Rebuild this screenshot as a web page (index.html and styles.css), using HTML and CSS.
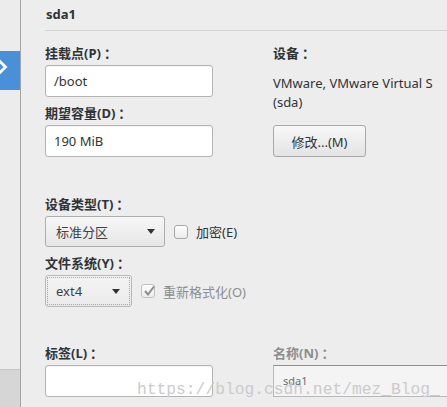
FILE: index.html
```html
<!DOCTYPE html>
<html lang="zh-CN">
<head>
<meta charset="utf-8">
<title>sda1</title>
<link rel="stylesheet" href="styles.css">
</head>
<body>
<div class="app">
  <aside class="sidebar">
    <div class="side-top"></div>
    <div class="side-sel">
      <svg class="chev" width="10" height="16" viewBox="0 0 10 16"><polyline points="-1,1.5 5.5,8 -1,14.5" fill="none" stroke="#ffffff" stroke-width="2.8"/></svg>
    </div>
    <div class="side-fill"></div>
    <div class="side-bottom"></div>
  </aside>
  <main class="main">
    <header class="title">sda1</header>

    <section class="row row-top">
      <div class="col-left">
        <label class="lbl">挂载点(P)<span class="colon">：</span></label>
        <div class="input">/boot</div>
        <label class="lbl lbl-next">期望容量(D)<span class="colon">：</span></label>
        <div class="input">190 MiB</div>
      </div>
      <div class="col-right">
        <div class="lbl">设备<span class="colon">：</span></div>
        <div class="dev">VMware, VMware Virtual S<br>(sda)</div>
        <button class="btn">修改...(M)</button>
      </div>
    </section>

    <section class="block">
      <label class="lbl">设备类型(T)<span class="colon">：</span></label>
      <div class="line">
        <div class="select select-wide"><span>标准分区</span><i class="arrow"></i></div>
        <span class="check"></span>
        <span class="check-text">加密(E)</span>
      </div>
      <label class="lbl lbl-next">文件系统(Y)<span class="colon">：</span></label>
      <div class="line line-fs">
        <div class="select select-narrow"><span>ext4</span><i class="arrow"></i></div>
        <span class="check check-off">
          <svg width="14" height="14" viewBox="0 0 14 14"><polyline points="3,7 6,10.5 12,2.5" fill="none" stroke="#8a8d8e" stroke-width="2"/></svg>
        </span>
        <span class="check-text muted">重新格式化(O)</span>
      </div>
    </section>

    <section class="row row-bottom">
      <div class="col-left">
        <label class="lbl">标签(L)<span class="colon">：</span></label>
        <div class="input"></div>
      </div>
      <div class="col-right col-grow">
        <label class="lbl muted">名称(N)<span class="colon">：</span></label>
        <div class="input input-off">sda1</div>
      </div>
    </section>
  </main>
  <div class="watermark">https://blog.csdn.net/mez_Blog_</div>
</div>
</body>
</html>
```

FILE: styles.css
```css
* { box-sizing: border-box; margin: 0; padding: 0; }

html, body { height: 100%; }

body {
  background: #ededed;
  font-family: "Noto Sans", "Noto Sans CJK SC", sans-serif;
  font-size: 13px;
  color: #2e3436;
  overflow: hidden;
}

.app {
  display: flex;
  height: 407px;
  position: relative;
  overflow: hidden;
}

/* left sidebar */
.sidebar {
  width: 21px;
  flex: none;
  border-right: 1px solid #a4a4a4;
  background: #ececec;
  display: flex;
  flex-direction: column;
}
.side-top { height: 51px; }
.side-sel { height: 39px; background: #4a90d9; overflow: hidden; }
.chev { display: block; margin-top: 8px; }
.side-fill { flex: 1; }
.side-bottom {
  height: 38px;
  background: #d6d6d6;
  border-top: 1px solid #c4c4c4;
}

/* main */
.main {
  flex: 1;
  min-width: 0;
  padding-left: 24px;
  overflow: hidden;
}

.title {
  height: 31px;
  line-height: 29px;
  font-weight: 700;
  padding-left: 1px;
  border-bottom: 1px solid #d3d3d3;
}

.row { display: flex; gap: 60px; }
.row-top { padding-top: 12px; }
.row-bottom { margin-top: 36px; }

.col-left { width: 168px; flex: none; display: flex; flex-direction: column; }
.col-right { display: flex; flex-direction: column; align-items: flex-start; }
.col-grow { flex: 1; min-width: 0; }

.lbl {
  display: block;
  line-height: 20px;
  font-weight: 700;
  margin-bottom: 2px;
  white-space: nowrap;
}
.lbl-next { margin-top: 6px; }
.colon { margin-left: 3px; }
.muted { color: #8b8e8f; }

.input {
  height: 32px;
  border: 1px solid #b3b3b3;
  border-radius: 3px;
  background: #ffffff;
  box-shadow: inset 0 1px 1px rgba(0, 0, 0, 0.05);
  padding: 0 8px;
  line-height: 30px;
  white-space: nowrap;
}

.input-off {
  width: 220px;
  background: #f4f4f4;
  border-color: #b9b9b9;
  border-top-color: #8e8e8e;
  border-radius: 0;
  box-shadow: none;
  font-size: 11px;
  color: #6b6e6f;
  padding-left: 9px;
}

.dev {
  margin-top: 9px;
  line-height: 19px;
  white-space: nowrap;
}

.btn {
  margin-top: 13px;
  width: 93px;
  height: 32px;
  font: inherit;
  color: #2e3436;
  border: 1px solid #a9a9a9;
  border-radius: 3px;
  background: linear-gradient(#f8f8f8, #e3e3e3);
}

/* device type / filesystem */
.block { margin-top: 37px; display: flex; flex-direction: column; }

.line { display: flex; align-items: center; }

.select {
  display: flex;
  align-items: center;
  justify-content: space-between;
  height: 31px;
  padding: 0 9px 0 10px;
  border: 1px solid #adadad;
  border-radius: 3px;
  background: linear-gradient(#f7f7f7, #e6e6e6);
  color: #3d4244;
}
.select-wide { width: 120px; }
.select-narrow {
  width: 87px;
  height: 32px;
  padding-right: 11px;
  border-color: #b8b8b8;
  background: linear-gradient(#f3f3f3, #ebebeb);
  outline: 1px dotted #a3a3a3;
  outline-offset: -3px;
}

.arrow {
  width: 0;
  height: 0;
  border-left: 4px solid transparent;
  border-right: 4px solid transparent;
  border-top: 5px solid #2e3436;
}

.check {
  width: 14px;
  height: 14px;
  margin-left: 9px;
  border: 1px solid #a7a7a7;
  border-radius: 3px;
  background: linear-gradient(#fdfdfd, #ececec);
  position: relative;
}
.check svg { position: absolute; left: 0; top: -1px; }
.check-off { border-color: #c0c0c0; }

.check-text { margin-left: 8px; white-space: nowrap; }

/* watermark overlay */
.watermark {
  position: absolute;
  left: 137px;
  top: 380px;
  font-family: "Liberation Mono", monospace;
  font-size: 16.3px;
  line-height: 20px;
  color: #cbcbcb;
  white-space: nowrap;
  pointer-events: none;
}
```
